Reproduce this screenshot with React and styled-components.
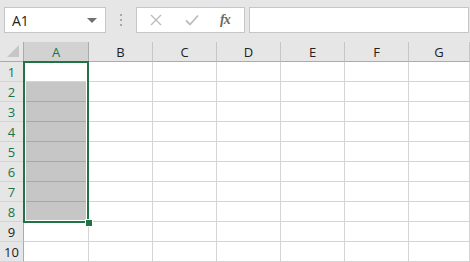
import React from 'react';
import styled, { createGlobalStyle } from 'styled-components';

const GlobalStyle = createGlobalStyle`
	html, body {
		margin: 0;
		padding: 0;
		background: #fff;
		overflow: hidden;
	}
	body {
		font-family: 'Open Sans', 'Liberation Sans', sans-serif;
	}
`;

const Page = styled.div`
	width: 470px;
	height: 262px;
	overflow: hidden;
	background: #fff;
`;

const Toolbar = styled.div`
	display: flex;
	align-items: flex-start;
	height: 42px;
	box-sizing: border-box;
	padding: 7px 1px 0 4px;
	background: #e6e6e6;
`;

const Box = styled.div`
	box-sizing: border-box;
	height: 26px;
	background: #fff;
	border: 1px solid #c6c6c6;
	display: flex;
	align-items: center;
`;

const NameBox = styled(Box)`
	width: 102px;
	padding: 0 8px 0 7px;
	justify-content: space-between;
	font-size: 14px;
	color: #222;
`;

const Arrow = styled.span`
	width: 0;
	height: 0;
	border-left: 5px solid transparent;
	border-right: 5px solid transparent;
	border-top: 5px solid #707070;
	margin-top: 1px;
`;

const Dots = styled.div`
	width: 30px;
	height: 26px;
	display: flex;
	flex-direction: column;
	align-items: center;
	justify-content: center;
	gap: 3px;
	span {
		width: 2px;
		height: 2px;
		background: #a8a8a8;
	}
`;

const FuncBox = styled(Box)`
	width: 109px;
	margin-right: 4px;
	padding-left: 13px;
	gap: 23px;
	color: #bdbdbd;
`;

const Fx = styled.span`
	font-family: 'Liberation Serif', serif;
	font-style: italic;
	font-size: 14px;
	color: #6a6a6a;
	font-weight: bold;
	letter-spacing: -1px;
	margin-left: -2px;
`;

const FormulaBox = styled(Box)`
	flex: 1;
`;

const Sheet = styled.div`
	position: relative;
	display: grid;
	grid-template-columns: 24px 65px repeat(5, 64px) 1fr;
	grid-auto-rows: 20px;
	font-size: 13px;
`;

const Corner = styled.div`
	background: #e6e6e6;
	border-bottom: 1px solid #ababab;
	border-right: 1px solid #ababab;
	box-sizing: border-box;
	position: relative;
	&::after {
		content: '';
		position: absolute;
		right: 4px;
		bottom: 4px;
		border-left: 12px solid transparent;
		border-bottom: 12px solid #c6c6c6;
	}
`;

const ColHead = styled.div`
	box-sizing: border-box;
	background: ${(p) => (p.$active ? '#d2d2d2' : '#e6e6e6')};
	color: ${(p) => (p.$active ? '#217346' : '#222')};
	border-bottom: 1px solid #ababab;
	border-right: 1px solid ${(p) => (p.$active ? '#ababab' : '#c6c6c6')};
	display: flex;
	align-items: center;
	justify-content: center;
	padding-top: 1px;
`;

const RowHead = styled.div`
	box-sizing: border-box;
	background: #e6e6e6;
	color: ${(p) => (p.$active ? '#217346' : '#222')};
	border-right: 1px solid #ababab;
	border-bottom: 1px solid #d4d4d4;
	display: flex;
	align-items: center;
	justify-content: center;
`;

const Cell = styled.div`
	box-sizing: border-box;
	background: ${(p) => (p.$filled ? '#c6c6c6' : '#fff')};
	border-right: 1px solid #d4d4d4;
	border-bottom: 1px solid ${(p) => (p.$filled ? '#a8a8a8' : '#d4d4d4')};
`;

const Selection = styled.div`
	position: absolute;
	left: 23px;
	top: 19px;
	width: 66px;
	height: 162px;
	box-sizing: border-box;
	border: 2px solid #217346;
	box-shadow: inset 0 0 0 1px #fff;
	pointer-events: none;
`;

const Handle = styled.div`
	position: absolute;
	left: 85px;
	top: 177px;
	width: 6px;
	height: 6px;
	background: #217346;
	border: 1px solid #fff;
`;

const cols = ['A', 'B', 'C', 'D', 'E', 'F', 'G'];
const rows = [1, 2, 3, 4, 5, 6, 7, 8, 9, 10];

const App = () => {
	return (
		<Page>
			<GlobalStyle />
			<Toolbar>
				<NameBox>
					<span>A1</span>
					<Arrow />
				</NameBox>
				<Dots>
					<span />
					<span />
					<span />
				</Dots>
				<FuncBox>
					<svg width='12' height='12' viewBox='0 0 12 12'>
						<path d='M1 1L11 11M11 1L1 11' stroke='#bdbdbd' strokeWidth='1.4' fill='none' />
					</svg>
					<svg width='14' height='12' viewBox='0 0 14 12'>
						<path d='M1 6.5L5 10.5L13 1.5' stroke='#bdbdbd' strokeWidth='1.8' fill='none' />
					</svg>
					<Fx>fx</Fx>
				</FuncBox>
				<FormulaBox />
			</Toolbar>
			<Sheet>
				<Corner />
				{cols.map((c) => (
					<ColHead key={c} $active={c === 'A'}>
						{c}
					</ColHead>
				))}
				{rows.map((r) => (
					<React.Fragment key={r}>
						<RowHead $active={r <= 8}>{r}</RowHead>
						{cols.map((c) => (
							<Cell key={c} $filled={c === 'A' && r >= 2 && r <= 8} />
						))}
					</React.Fragment>
				))}
				<Selection />
				<Handle />
			</Sheet>
		</Page>
	);
};

export default App;
